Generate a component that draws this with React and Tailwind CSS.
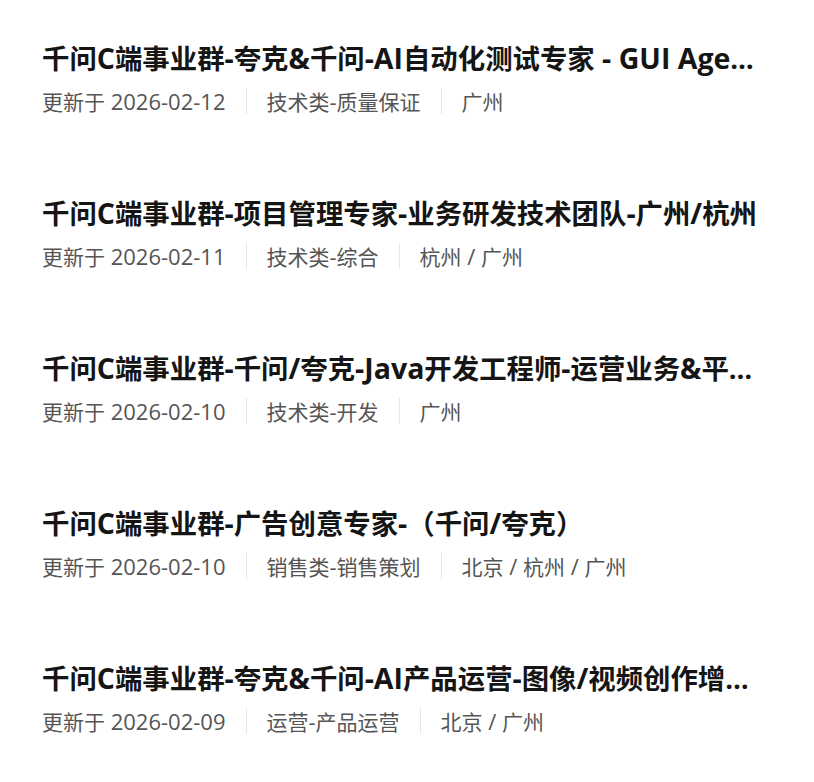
import React from 'react';

const jobs = [
  { title: '千问C端事业群-夸克&千问-AI自动化测试专家 - GUI Agent方向', date: '2026-02-12', category: '技术类-质量保证', city: '广州' },
  { title: '千问C端事业群-项目管理专家-业务研发技术团队-广州/杭州', date: '2026-02-11', category: '技术类-综合', city: '杭州 / 广州' },
  { title: '千问C端事业群-千问/夸克-Java开发工程师-运营业务&平台技术', date: '2026-02-10', category: '技术类-开发', city: '广州' },
  { title: '千问C端事业群-广告创意专家-（千问/夸克）', date: '2026-02-10', category: '销售类-销售策划', city: '北京 / 杭州 / 广州' },
  { title: '千问C端事业群-夸克&千问-AI产品运营-图像/视频创作增长方向', date: '2026-02-09', category: '运营-产品运营', city: '北京 / 广州' },
];

// latin runs get a wider latin face, CJK stays in Noto Sans CJK
const Mixed = ({ text, latinClass }) =>
  text.split(/([\u0000-\u024F]+)/).filter(Boolean).map((part, i) =>
    /^[\u0000-\u024F]+$/.test(part)
      ? <span key={i} className={latinClass} style={{ fontFamily: '"Open Sans", sans-serif' }}>{part}</span>
      : <span key={i}>{part}</span>
  );

const JobItem = ({ job }) => (
  <div className="h-[155px] pt-[38px]">
    <h3
      className="truncate text-[27.4px] leading-[40px] font-bold text-[#151515]"
      style={{ fontFamily: '"Open Sans", "Noto Sans CJK SC", sans-serif' }}
    >
      <Mixed text={job.title} latinClass="text-[28.5px]" />
    </h3>
    <div className="mt-[8px] flex items-center text-[21px] leading-[28px] text-[#555]">
      <span className="whitespace-pre"><Mixed text={'更新于 ' + job.date} latinClass="text-[22px]" /></span>
      <span className="mx-[20px] h-[26px] w-px bg-[#e3e6ea]" />
      <span className="whitespace-pre"><Mixed text={job.category} latinClass="text-[22px]" /></span>
      <span className="mx-[20px] h-[26px] w-px bg-[#e3e6ea]" />
      <span className="whitespace-pre"><Mixed text={job.city} latinClass="text-[22px]" /></span>
    </div>
  </div>
);

export default function App() {
  return (
    <div className="min-h-screen bg-white px-[42px]" style={{ fontFamily: '"Noto Sans CJK SC", "Noto Sans", sans-serif' }}>
      <div className="w-[728px]">
        {jobs.map((job, i) => (
          <JobItem key={i} job={job} />
        ))}
      </div>
    </div>
  );
}
